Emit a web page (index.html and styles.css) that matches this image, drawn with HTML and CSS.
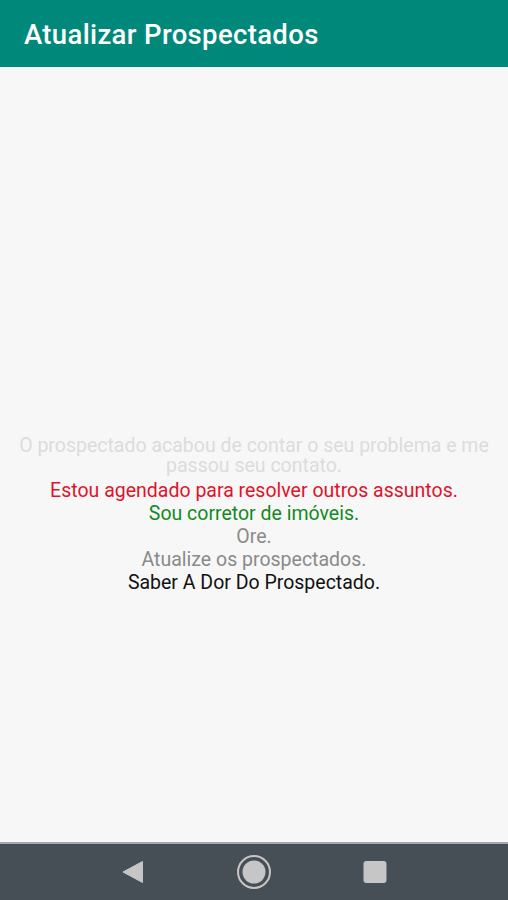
FILE: index.html
```html
<!DOCTYPE html>
<html lang="pt">
<head>
    <meta charset="UTF-8">
    <meta name="viewport" content="width=device-width, initial-scale=1.0">
    <title>Atualizar Prospectados</title>
    <link rel="stylesheet" href="styles.css">
</head>
<body>
<div class="app">
    <header class="toolbar">
        <h1>Atualizar Prospectados</h1>
    </header>

    <main class="content">
        <div class="messages">
            <p class="msg faded">O prospectado acabou de contar o seu problema e me passou seu contato.</p>
            <p class="msg red">Estou agendado para resolver outros assuntos.</p>
            <p class="msg green">Sou corretor de imóveis.</p>
            <p class="msg grey">Ore.</p>
            <p class="msg grey">Atualize os prospectados.</p>
            <p class="msg dark">Saber A Dor Do Prospectado.</p>
        </div>
    </main>

    <nav class="navbar">
        <div class="nav-btn">
            <svg width="24" height="24" viewBox="0 0 24 24">
                <path d="M21.5 1.5 L21.5 22.5 L2 12 Z" fill="#c6c6c6" stroke="#c6c6c6" stroke-width="1" stroke-linejoin="round"/>
            </svg>
        </div>
        <div class="nav-btn">
            <svg width="36" height="36" viewBox="0 0 36 36">
                <circle cx="18" cy="18" r="16" fill="none" stroke="#c6c6c6" stroke-width="2"/>
                <circle cx="18" cy="18" r="11.5" fill="#c6c6c6"/>
            </svg>
        </div>
        <div class="nav-btn">
            <svg width="24" height="24" viewBox="0 0 24 24">
                <rect x="0.5" y="1" width="23" height="22" rx="3" fill="#c6c6c6"/>
            </svg>
        </div>
    </nav>
</div>
</body>
</html>
```

FILE: styles.css
```css
body {
    margin: 0;
    font-family: Roboto, "Noto Sans", Arial, sans-serif;
    background-color: #f7f7f7;
}

.app {
    display: flex;
    flex-direction: column;
    height: 900px;
}

.toolbar {
    height: 67px;
    background-color: #00897b;
    display: flex;
    align-items: center;
    padding: 2px 24px 0;
    box-sizing: border-box;
    flex-shrink: 0;
}

.toolbar h1 {
    margin: 0;
    font-size: 27.5px;
    font-weight: 500;
    color: #fff;
    letter-spacing: 0.35px;
}

.content {
    flex: 1;
    display: flex;
    align-items: center;
    justify-content: center;
    padding: 120px 10px 0;
}

.messages {
    text-align: center;
}

.msg {
    margin: 0;
    font-size: 19.5px;
    line-height: 23px;
}

.faded {
    color: #dcdcdc;
    line-height: 20px;
    margin-bottom: 3px;
}

.red {
    color: #e0132a;
}

.green {
    color: #138a24;
}

.grey {
    color: #8a8a8a;
}

.dark {
    color: #111;
}

.navbar {
    height: 56px;
    background-color: #474f56;
    border-top: 2px solid #a3a8ab;
    display: flex;
    align-items: center;
    justify-content: center;
    gap: 81px;
    flex-shrink: 0;
}

.nav-btn {
    width: 40px;
    display: flex;
    justify-content: center;
    align-items: center;
}
```
